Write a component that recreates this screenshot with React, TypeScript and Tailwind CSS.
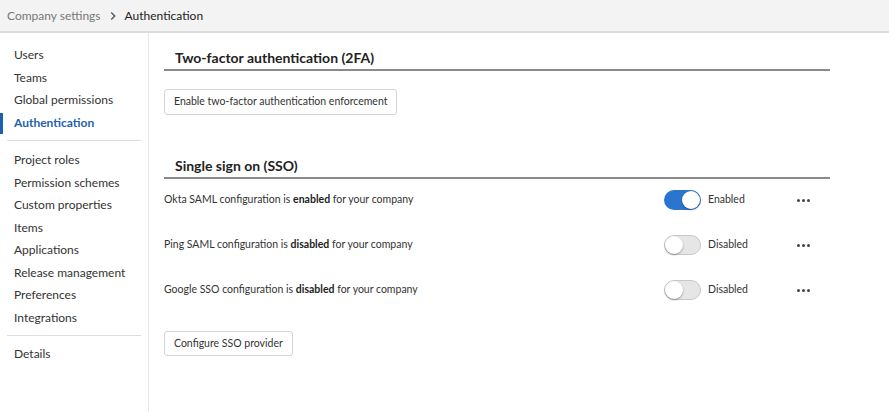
import React from "react";

const groupA = ["Users", "Teams", "Global permissions", "Authentication"];
const groupB = [
  "Project roles",
  "Permission schemes",
  "Custom properties",
  "Items",
  "Applications",
  "Release management",
  "Preferences",
  "Integrations",
];

type Provider = { name: string; on: boolean };
const providers: Provider[] = [
  { name: "Okta SAML", on: true },
  { name: "Ping SAML", on: false },
  { name: "Google SSO", on: false },
];

const NavItem = ({ label }: { label: string }) => {
  const active = label === "Authentication";
  return (
    <li className="relative flex h-[22.5px] items-center">
      {active && <span className="absolute left-0 top-[1px] h-[21px] w-[3px] bg-[#1f5fb0]" />}
      <span
        className={
          active
            ? "pl-[14px] text-[12px] font-bold text-[#1f5fb0]"
            : "pl-[14px] text-[12px] text-[#333]"
        }
      >
        {label}
      </span>
    </li>
  );
};

const Toggle = ({ on }: { on: boolean }) => (
  <div
    className={
      on
        ? "relative h-[20px] w-[37px] rounded-full bg-[#2b74cf]"
        : "relative h-[20px] w-[37px] rounded-full border border-[#c8c8c8] bg-[#e6e6e6]"
    }
  >
    <span
      className={
        on
          ? "absolute right-[1px] top-[1px] h-[18px] w-[18px] rounded-full bg-white shadow-[0_1px_2px_rgba(0,0,0,0.35)]"
          : "absolute left-0 top-0 h-[18px] w-[18px] rounded-full bg-white shadow-[0_1px_2px_rgba(0,0,0,0.35)]"
      }
    />
  </div>
);

const Dots = () => (
  <div className="flex gap-[2px]">
    <span className="h-[3px] w-[3px] rounded-full bg-[#444]" />
    <span className="h-[3px] w-[3px] rounded-full bg-[#444]" />
    <span className="h-[3px] w-[3px] rounded-full bg-[#444]" />
  </div>
);

const SectionTitle = ({ children }: { children: React.ReactNode }) => (
  <div className="w-[666px] border-b-2 border-[#8a8a8a] pb-[1px] pl-[11px]">
    <h2 className="text-[14px] font-bold leading-[20px] text-[#222]">{children}</h2>
  </div>
);

export default function App() {
  return (
    <div className="flex h-[412px] w-[889px] flex-col overflow-hidden bg-white font-['Lato',sans-serif] text-[#333]">
      <header className="flex h-[33px] shrink-0 items-center border-b-2 border-[#dcdcdc] bg-[#f3f3f3] px-[7px] text-[12px]">
        <span className="text-[#777]">Company settings</span>
        <svg width="14" height="14" viewBox="0 0 16 16" className="mx-[5px]" fill="none">
          <path d="M6 4l4 4-4 4" stroke="#555" strokeWidth="1.6" />
        </svg>
        <span className="text-[#222]">Authentication</span>
      </header>
      <div className="flex min-h-0 flex-1">
        <aside className="w-[149px] shrink-0 border-r border-[#e2e8ef] pt-[11px]">
          <ul>
            {groupA.map((l) => (
              <NavItem key={l} label={l} />
            ))}
          </ul>
          <div className="mx-[7px] mb-[8px] mt-[6px] border-t border-[#dedede]" />
          <ul>
            {groupB.map((l) => (
              <NavItem key={l} label={l} />
            ))}
          </ul>
          <div className="mx-[7px] mb-[7px] mt-[6px] border-t border-[#dedede]" />
          <ul>
            <NavItem label="Details" />
          </ul>
        </aside>
        <main className="flex-1 pl-[15px] pt-[15px]">
          <SectionTitle>Two-factor authentication (2FA)</SectionTitle>
          <button className="mt-[18px] h-[26px] rounded-[3px] border border-[#d4d4d4] bg-white px-[9px] text-[10.5px] text-[#333]">
            Enable two-factor authentication enforcement
          </button>
          <div className="mt-[41px]">
            <SectionTitle>Single sign on (SSO)</SectionTitle>
          </div>
          <div className="mt-[11px] flex w-[666px] flex-col gap-[25px]">
            {providers.map((p) => (
              <div key={p.name} className="flex h-[20px] items-center text-[10.5px]">
                <span className="flex-1">
                  {p.name} configuration is <b className="text-[#222]">{p.on ? "enabled" : "disabled"}</b> for your company
                </span>
                <Toggle on={p.on} />
                <span className="ml-[7px] w-[89px]">{p.on ? "Enabled" : "Disabled"}</span>
                <div className="w-[33px]">
                  <Dots />
                </div>
              </div>
            ))}
          </div>
          <button className="mt-[31px] h-[25px] rounded-[3px] border border-[#d4d4d4] bg-white px-[9px] text-[10.5px] text-[#333]">
            Configure SSO provider
          </button>
        </main>
      </div>
    </div>
  );
}
